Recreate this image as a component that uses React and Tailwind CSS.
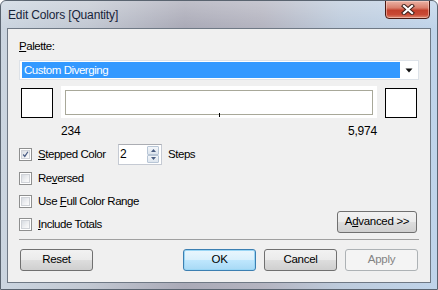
import React from "react";

const font = { fontFamily: '"Liberation Sans", Arial, sans-serif' };

function CheckBox({ checked }) {
  return (
    <div className="w-[13px] h-[13px] border border-[#8e8f8f] bg-white p-[1px] shrink-0">
      <div className="w-full h-full border border-[#d0d3d8] bg-[linear-gradient(135deg,#d8dce2_0%,#f0f1f3_60%,#fbfbfb_100%)] flex items-center justify-center">
        {checked && (
          <svg width="9" height="9" viewBox="0 0 9 9">
            <path d="M1.5 4.5 L3.6 7 L7.6 1" fill="none" stroke="#4c5f86" strokeWidth="1.6" />
          </svg>
        )}
      </div>
    </div>
  );
}

function Btn({ children, variant, w = "w-[73px]", className = "" }) {
  let cls =
    "border-[#707070] bg-[linear-gradient(180deg,#f2f2f2_0%,#ebebeb_48%,#dddddd_52%,#cfcfcf_100%)] text-black";
  if (variant === "default")
    cls =
      "border-[#3c7fb1] bg-[linear-gradient(180deg,#eaf6fd_0%,#d9f0fc_48%,#bee6fd_52%,#a7d9f5_100%)] text-black shadow-[inset_0_0_0_1px_#9ad6f5]";
  if (variant === "disabled")
    cls = "border-[#adb2b5] bg-[#f4f4f4] text-[#838383]";
  return (
    <div
      className={`${w} h-[22px] rounded-[3px] border flex items-center justify-center text-[11.5px] tracking-[-0.3px] ${cls} ${className}`}
    >
      <div className="rounded-[2px] w-full h-full flex items-center justify-center">{children}</div>
    </div>
  );
}

export default function App() {
  return (
    <div
      style={font}
      className="w-[438px] h-[290px] overflow-hidden flex flex-col rounded-t-[6px] border border-[#5a6470] bg-[linear-gradient(90deg,#cbd5e0_0%,#c2c8d2_20%,#aaaab7_42%,#b4b4c0_60%,#bdcbdc_78%,#c0d4ea_100%)]"
    >
      {/* title bar */}
      <div className="h-[27px] flex items-start justify-between pl-[7px] pr-[7px] shrink-0 bg-[linear-gradient(180deg,rgba(255,255,255,0.25),rgba(255,255,255,0))]">
        <div className="mt-[6px] text-[12px] leading-[16px] tracking-[-0.15px] text-[#17243a]">
          Edit Colors [Quantity]
        </div>
        <div className="w-[45px] h-[19px] -mt-px rounded-b-[4px] border border-[#4a1a12] bg-[linear-gradient(180deg,#eab3a5_0%,#d9806d_40%,#c2402c_55%,#c94a35_80%,#dc8a72_100%)] flex items-center justify-center shadow-[inset_0_0_0_1px_rgba(255,220,210,0.5)]">
          <svg width="14" height="11" viewBox="0 0 14 11">
            <path d="M3 2 L11 9 M11 2 L3 9" stroke="#40231d" strokeWidth="4.2" strokeLinecap="square" />
            <path d="M3 2 L11 9 M11 2 L3 9" stroke="#ffffff" strokeWidth="2.2" strokeLinecap="square" />
          </svg>
        </div>
      </div>

      {/* client area */}
      <div className="mx-[6px] h-[255px] border border-[#6f7985] bg-[#f0f0f0] flex flex-col shrink-0 text-[11.5px] tracking-[-0.45px] text-black">
        <div className="ml-[11px] mt-[11px] h-[13px] leading-[13px]">
          <u>P</u>alette:
        </div>

        {/* dropdown */}
        <div className="ml-[11px] mt-[7px] w-[400px] h-[20px] border border-[#dde2e8] bg-white flex items-stretch py-[1px] pl-[2px]">
          <div className="w-[378px] bg-[#3399ff] text-white leading-[16px] pl-[2px]">
            Custom Diverging
          </div>
          <div className="flex-1 flex items-center justify-center">
            <svg width="8" height="5" viewBox="0 0 8 5">
              <path d="M0.5 0.5 H7.5 L4 4.5 Z" fill="#111" />
            </svg>
          </div>
        </div>

        {/* color row */}
        <div className="ml-[13px] mt-[6px] flex items-start">
          <div className="mt-[2px] w-[32px] h-[30px] border border-black bg-white" />
          <div className="ml-[8px] w-[316px] h-[32px] bg-white pt-[4px] pl-[4px]">
            <div className="relative w-[308px] h-[25px] border border-[#a8a899]">
              <div className="absolute left-[153px] bottom-[-3px] w-px h-[4px] bg-black" />
            </div>
          </div>
          <div className="ml-[8px] mt-[2px] w-[32px] h-[30px] border border-black bg-white" />
        </div>

        {/* numbers */}
        <div className="ml-[53px] mt-[6px] w-[316px] h-[14px] leading-[14px] flex justify-between text-[12px] tracking-[-0.2px]">
          <span>234</span>
          <span>5,974</span>
        </div>

        {/* stepped row */}
        <div className="ml-[11px] mt-[6px] h-[21px] flex items-center">
          <CheckBox checked />
          <span className="ml-[6px] w-[80px]">
            <u>S</u>tepped Color
          </span>
          <div className="w-[44px] h-[21px] border border-[#c5cad3] border-t-[#abadb3] bg-white flex items-stretch">
            <div className="flex-1 pl-[1px] leading-[19px] text-[12px]">2</div>
            <div className="w-[12px] flex flex-col py-px mr-[2px]">
              <div className="flex-1 border border-[#b8c6d6] rounded-[1px] bg-[linear-gradient(180deg,#f3f6fa,#dde5ee)] flex items-center justify-center">
                <svg width="5" height="3" viewBox="0 0 5 3"><path d="M0 3 L2.5 0 L5 3 Z" fill="#4b5e82" /></svg>
              </div>
              <div className="flex-1 border border-[#b8c6d6] rounded-[1px] bg-[linear-gradient(180deg,#f3f6fa,#dde5ee)] flex items-center justify-center">
                <svg width="5" height="3" viewBox="0 0 5 3"><path d="M0 0 L2.5 3 L5 0 Z" fill="#4b5e82" /></svg>
              </div>
            </div>
          </div>
          <span className="ml-[6px]">Steps</span>
        </div>

        <div className="ml-[11px] mt-[7px] h-[13px] flex items-center">
          <CheckBox />
          <span className="ml-[6px]">
            Re<u>v</u>ersed
          </span>
        </div>

        <div className="ml-[11px] mt-[10px] h-[13px] flex items-center">
          <CheckBox />
          <span className="ml-[6px]">
            Use <u>F</u>ull Color Range
          </span>
        </div>

        <div className="ml-[11px] mt-[3px] w-[398px] flex items-start">
          <div className="mt-[7px] flex items-center h-[13px]">
            <CheckBox />
            <span className="ml-[6px]">
              <u>I</u>nclude Totals
            </span>
          </div>
          <Btn w="w-[80px]" className="ml-auto">
            A<u>d</u>vanced &gt;&gt;
          </Btn>
        </div>

        <div className="ml-[11px] mt-[6px] w-[400px] h-px bg-[#a0a0a0]" />

        <div className="ml-[12px] mt-[9px] flex">
          <Btn>Reset</Btn>
          <Btn variant="default" className="ml-[90px]">OK</Btn>
          <Btn className="ml-[8px]">Cancel</Btn>
          <Btn variant="disabled" className="ml-[8px]">Apply</Btn>
        </div>
      </div>
    </div>
  );
}
